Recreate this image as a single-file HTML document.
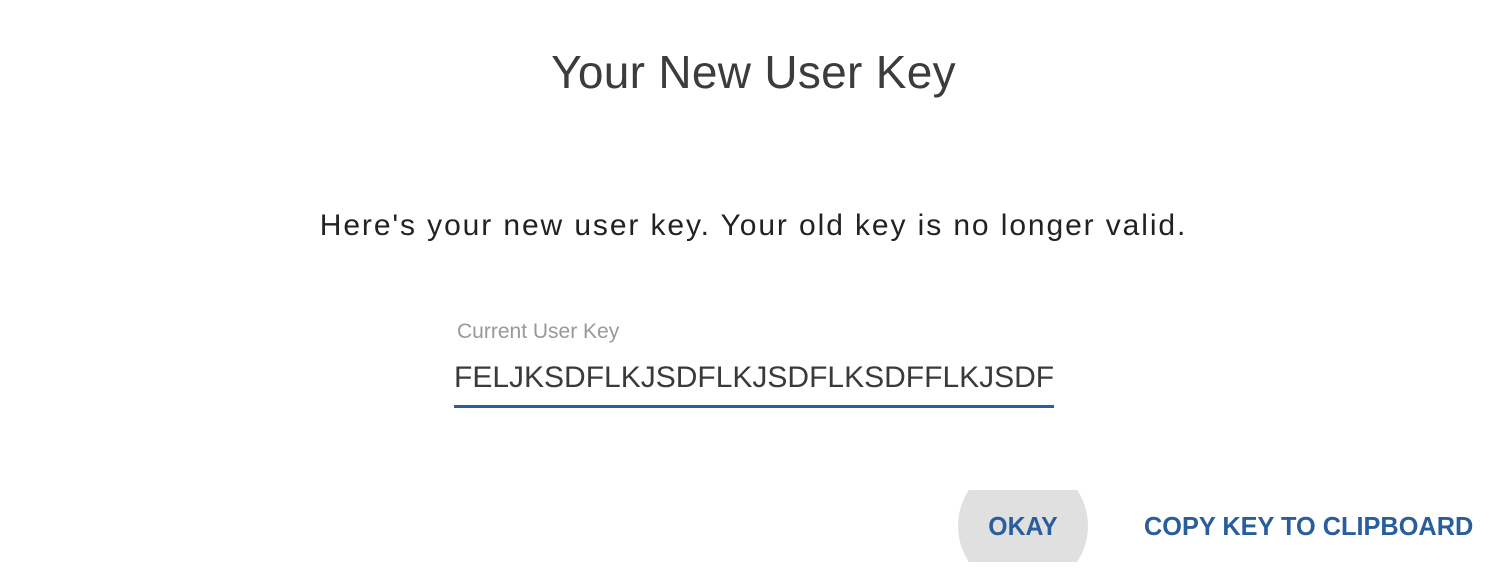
<!DOCTYPE html>
<html><head><style>
body{margin:0;width:1512px;height:572px;background:#fff;font-family:"Liberation Sans",sans-serif;position:relative;overflow:hidden}
.a{position:absolute;white-space:nowrap}
</style></head><body>
<div class="a" style="left:0;width:1507px;text-align:center;top:45px;font-size:46px;color:#3c3c3c;letter-spacing:0.3px">Your New User Key</div>
<div class="a" style="left:0;width:1507px;text-align:center;top:209px;font-size:30px;color:#222;letter-spacing:1.9px">Here's your new user key. Your old key is no longer valid.</div>
<div class="a" style="left:457px;top:320px;font-size:21px;color:#999">Current User Key</div>
<div class="a" style="left:454px;top:361px;font-size:30px;color:#3a3a3a;">FELJKSDFLKJSDFLKJSDFLKSDFFLKJSDF</div>
<div class="a" style="left:454px;top:405px;width:600px;height:3px;background:#2a5d9c"></div>
<div class="a" style="left:958px;top:490px;width:130px;height:72px;overflow:hidden"><div style="position:absolute;left:0;top:-29px;width:130px;height:130px;border-radius:50%;background:#e0e0e0"></div></div>
<div class="a" style="left:958px;width:130px;text-align:center;top:511px;font-size:26px;font-weight:bold;color:#2a5d9c;transform:scaleX(0.955)">OKAY</div>
<div class="a" style="left:1144px;top:511px;font-size:26px;font-weight:bold;color:#2a5d9c;transform:scaleX(0.974);transform-origin:left">COPY KEY TO CLIPBOARD</div>
</body></html>
